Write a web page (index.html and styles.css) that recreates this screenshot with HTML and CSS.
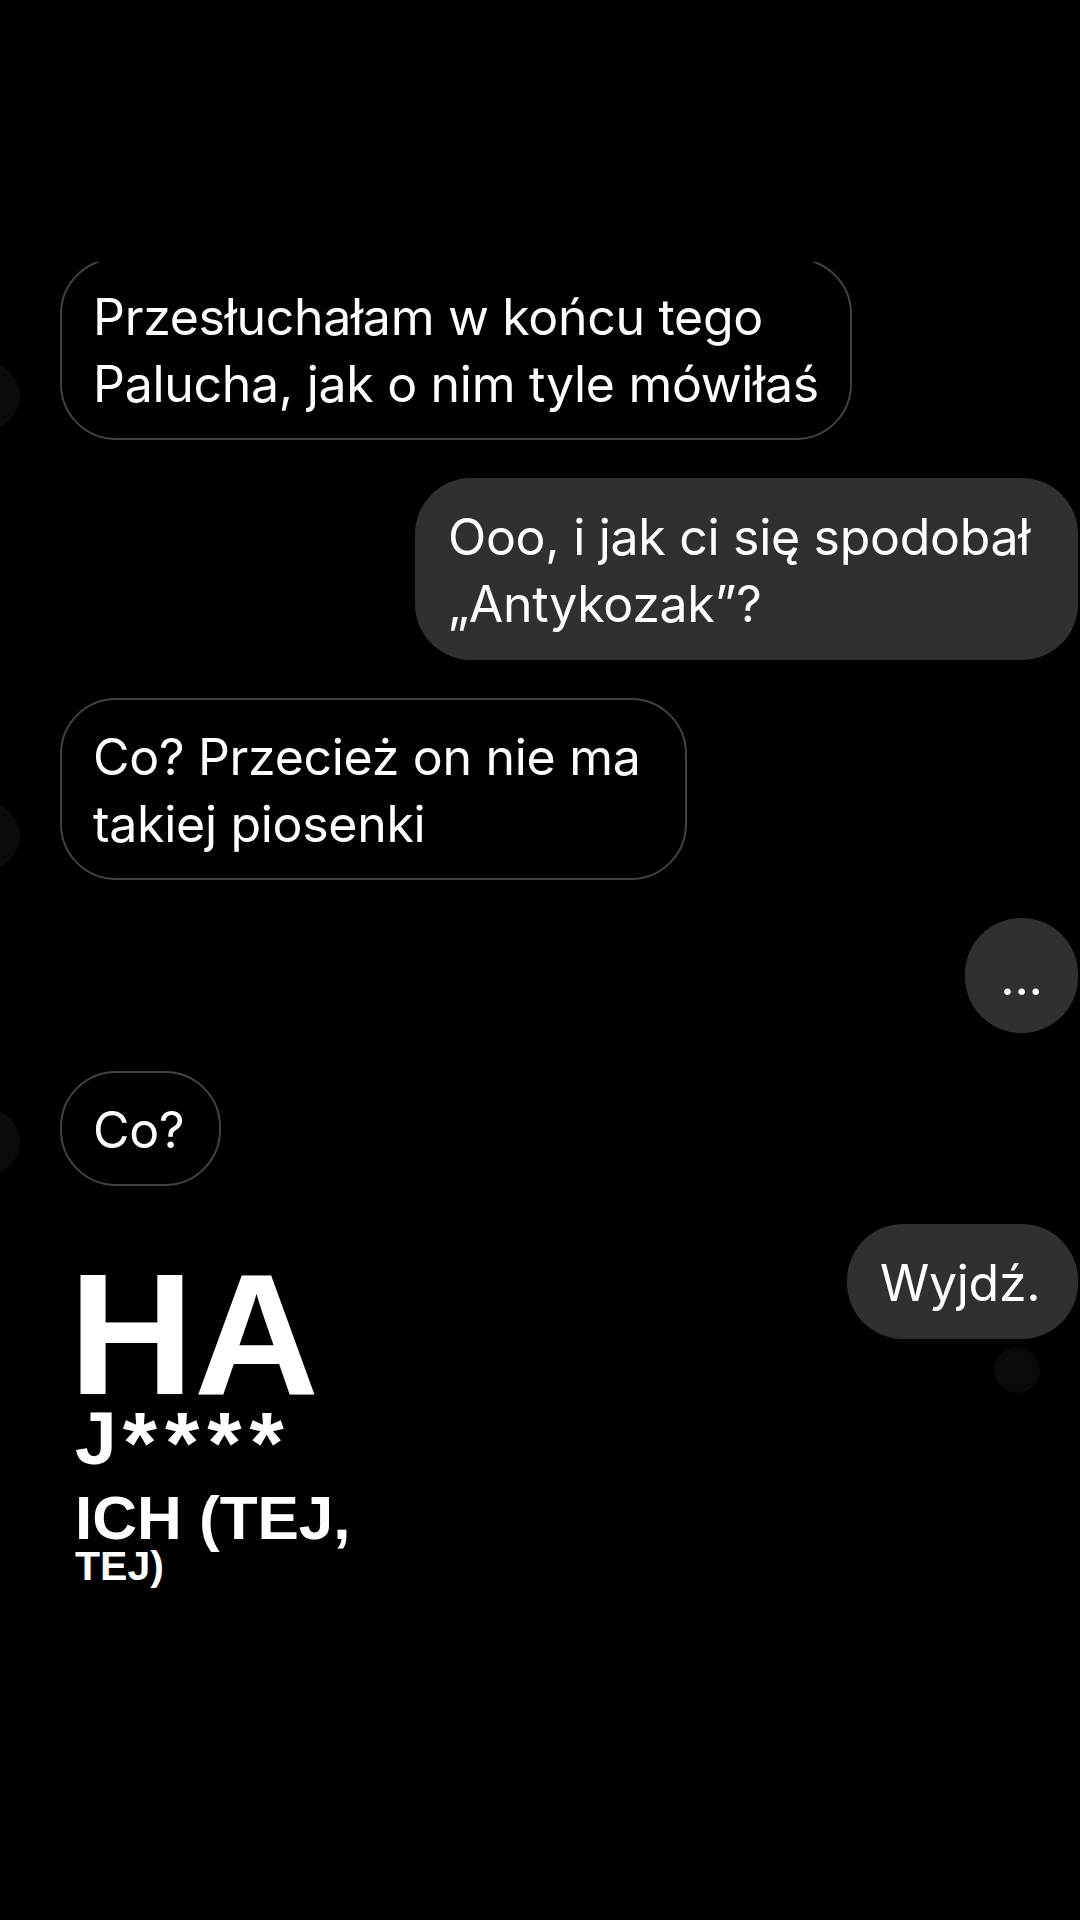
FILE: index.html
```html
<!DOCTYPE html>
<html lang="pl">
<head>
<meta charset="utf-8">
<title>Czat</title>
<link rel="stylesheet" href="styles.css">
</head>
<body>
<div class="screen">
  <div class="thread">
    <div class="row in first">
      <span class="avatar"></span>
      <div class="bubble outline w1">Przesłuchałam w końcu tego<br>Palucha, jak o nim tyle mówiłaś</div>
    </div>
    <div class="row out">
      <div class="bubble filled w2">Ooo, i jak ci się spodobał<br>„Antykozak”?</div>
    </div>
    <div class="row in">
      <span class="avatar"></span>
      <div class="bubble outline w3">Co? Przecież on nie ma<br>takiej piosenki</div>
    </div>
    <div class="row out">
      <div class="bubble filled w-typing">...</div>
    </div>
    <div class="row in">
      <span class="avatar"></span>
      <div class="bubble outline w-co">Co?</div>
    </div>
    <div class="row split">
      <div class="sticker">
        <span class="st-ha">HA</span>
        <span class="st-j">J<span class="st-stars">****</span></span>
        <span class="st-ich">ICH (TEJ,</span>
        <span class="st-tej">TEJ)</span>
      </div>
      <div class="out-col">
        <div class="bubble filled w-wyjdz">Wyjdź.</div>
        <span class="receipt"></span>
      </div>
    </div>
  </div>
</div>
</body>
</html>
```
FILE: styles.css
```css
html, body {
  margin: 0;
  padding: 0;
  background: #000;
}
body {
  width: 1080px;
  height: 1920px;
  overflow: hidden;
  font-family: Inter, "Noto Sans", sans-serif;
  color: #fff;
}
.screen {
  box-sizing: border-box;
  height: 1920px;
  padding-top: 262px;
}
.thread {
  height: 100%;
  overflow: hidden;
  display: flex;
  flex-direction: column;
}
.row {
  display: flex;
  align-items: flex-end;
  margin-top: 38px;
}
.row.first {
  margin-top: -4px;
}
.row.out {
  justify-content: flex-end;
  padding-right: 2px;
}
.avatar {
  flex: none;
  width: 68px;
  height: 68px;
  border-radius: 50%;
  background: #0b0b0b;
  margin-left: -48px;
  margin-right: 40px;
  margin-bottom: 10px;
}
.bubble {
  flex: none;
  box-sizing: border-box;
  font-size: 50px;
  line-height: 67px;
  letter-spacing: -0.3px;
  padding: 26px 33px 22px;
  border-radius: 56px;
  white-space: nowrap;
}
.outline {
  border: 2px solid #424242;
  padding: 24px 31px 20px;
  background: #000;
}
.filled {
  background: #303030;
}
.w1 { width: 792px; }
.w2 { width: 663px; }
.w3 { width: 627px; }
.w-typing {
  width: 113px;
  padding-left: 0;
  padding-right: 0;
  text-align: center;
}
.w-co { width: 161px; }
.w-wyjdz { width: 231px; }

.row.split {
  justify-content: space-between;
  align-items: flex-start;
}
.sticker {
  display: flex;
  flex-direction: column;
  margin-top: 24px;
  margin-left: 75px;
  font-family: "Liberation Sans", Arial, sans-serif;
  font-weight: 700;
  line-height: 1;
  color: #fff;
}
.st-ha {
  font-size: 173px;
  margin-left: -6px;
}
.st-j {
  font-size: 75px;
  margin-top: -20px;
}
.st-stars {
  font-size: 88px;
  line-height: 0;
  letter-spacing: 8px;
  margin-left: 6px;
  vertical-align: -9px;
}
.st-ich {
  font-size: 62px;
  margin-top: 11px;
}
.st-tej {
  font-size: 41px;
  margin-top: -3px;
}
.out-col {
  display: flex;
  flex-direction: column;
  align-items: flex-end;
  padding-right: 2px;
}
.receipt {
  width: 46px;
  height: 46px;
  border-radius: 50%;
  background: #0a0a0a;
  margin-top: 8px;
  margin-right: 38px;
}
```
